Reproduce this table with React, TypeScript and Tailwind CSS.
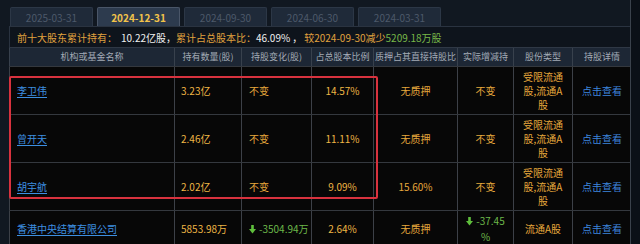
import React from "react";

const F = { fontFamily: '"Noto Sans CJK SC", "Noto Sans", sans-serif' };

const tabs = ["2025-03-31", "2024-12-31", "2024-09-30", "2024-06-30", "2024-03-31"];

function Down() {
  return (
    <svg width="7" height="9" viewBox="0 0 7 9" className="inline-block mr-[3px] align-[-1px]">
      <rect x="2.2" y="0" width="2.6" height="4.5" fill="#5fbf3c" />
      <path d="M0 4 L7 4 L3.5 8.5 Z" fill="#5fbf3c" />
    </svg>
  );
}

const cols = ["w-[165px]", "w-[67px]", "w-[70px]", "w-[62px]", "w-[84px]", "w-[56px]", "w-[59px]", "w-[59px]"];
const heads = ["机构或基金名称", "持有数量(股)", "持股变化(股)", "占总股本比例", "质押占其直接持股比", "实际增减持", "股份类型", "持股详情"];

type Row = { name: string; qty: string; chg: React.ReactNode; pct: string; pledge: string; act: React.ReactNode; type: React.ReactNode; h: string };

const restricted = (
  <div className="leading-[14px]">
    <div>受限流通</div>
    <div>股,流通A</div>
    <div>股</div>
  </div>
);

const rows: Row[] = [
  { name: "李卫伟", qty: "3.23亿", chg: "不变", pct: "14.57%", pledge: "无质押", act: "不变", type: restricted, h: "h-[48px]" },
  { name: "曾开天", qty: "2.46亿", chg: "不变", pct: "11.11%", pledge: "无质押", act: "不变", type: restricted, h: "h-[48px]" },
  { name: "胡宇航", qty: "2.02亿", chg: "不变", pct: "9.09%", pledge: "15.60%", act: "不变", type: restricted, h: "h-[48px]" },
  {
    name: "香港中央结算有限公司",
    qty: "5853.98万",
    chg: (
      <span className="text-[#6cb84a]">
        <Down />-3504.94万
      </span>
    ),
    pct: "2.64%",
    pledge: "无质押",
    act: (
      <div className="text-[#6cb84a] leading-[16px] text-center">
        <div>
          <Down />
          -37.45
        </div>
        <div>%</div>
      </div>
    ),
    type: "流通A股",
    h: "h-[36px]",
  },
];

export default function App() {
  return (
    <div style={F} className="w-[640px] h-[244px] bg-[#111821] overflow-hidden relative text-[10px]">
      <div className="flex">
        <div className="w-[9px] shrink-0" />
        <div className="w-[622px] shrink-0 flex flex-col border-r border-[#3a414b]">
          {/* tabs */}
          <div className="flex gap-[4px] pt-[7px] pl-[1px] h-[26px]">
            {tabs.map((t, i) => (
              <div
                key={t}
                className={
                  "w-[83px] h-[19px] flex items-center justify-center rounded-t-[2px] border border-b-0 text-[10px] " +
                  (i === 1
                    ? "bg-[#2d3b4e] border-[#4a5668] text-[#f2c34a] font-bold"
                    : "bg-[#1f2a39] border-[#2c3746] text-[#4d596a]")
                }
              >
                {t}
              </div>
            ))}
          </div>
          {/* summary */}
          <div className="h-[21px] bg-[#0e141c] border-t border-l border-[#2a3340] flex items-center pl-[7px] text-[10px] whitespace-nowrap">
            <span className="text-[#e0a23e]">前十大股东累计持有：</span>
            <span className="text-[#f0f0f0] ml-[4px]">10.22亿股，</span>
            <span className="text-[#e0a23e]">累计占总股本比：</span>
            <span className="text-[#f0f0f0]">46.09%</span>
            <span className="text-[#f0f0f0] mx-[2px]">，</span>
            <span className="text-[#e0a23e]">较2024-09-30减少</span>
            <span className="text-[#78b848]">5209.18万股</span>
          </div>
          {/* header */}
          <div className="h-[19px] bg-[#1d2735] flex border-t border-[#2f3845]">
            {heads.map((h, i) => (
              <div
                key={h}
                className={cols[i] + " shrink-0 flex items-center justify-center text-[#a3abb6] text-[9px] border-l border-[#38414d]"}
              >
                {h}
              </div>
            ))}
          </div>
          {/* rows */}
          {rows.map((r, ri) => (
            <div key={ri} className={r.h + " bg-[#070707] flex border-t border-[#34383e] text-[#e6a73c] overflow-hidden"}>
              <div className={cols[0] + " shrink-0 flex items-center pl-[7px] border-l border-[#3c4047]"}>
                <span className="text-[#3d8fe0] underline underline-offset-2">{r.name}</span>
              </div>
              <div className={cols[1] + " shrink-0 flex items-center pl-[6px] border-l border-[#3c4047] text-[#eeb645]"}>
                {r.qty}
              </div>
              <div className={cols[2] + " shrink-0 flex items-center pl-[7px] border-l border-[#3c4047]"}>{r.chg}</div>
              <div className={cols[3] + " shrink-0 flex items-center justify-center border-l border-[#3c4047] text-[#eeb645]"}>
                {r.pct}
              </div>
              <div className={cols[4] + " shrink-0 flex items-center justify-center border-l border-[#3c4047]"}>{r.pledge}</div>
              <div className={cols[5] + " shrink-0 flex items-center justify-center border-l border-[#3c4047]"}>{r.act}</div>
              <div className={cols[6] + " shrink-0 flex items-center justify-center text-center border-l border-[#3c4047]"}>
                {r.type}
              </div>
              <div className={cols[7] + " shrink-0 flex items-center justify-center border-l border-[#3c4047]"}>
                <span className="text-[#3d85dc]">点击查看</span>
              </div>
            </div>
          ))}
        </div>
        <div className="flex-1 bg-[#0b1017]" />
      </div>
      {/* highlight annotation */}
      <div className="absolute left-[9px] top-[76px] w-[369px] h-[123px] border-2 border-[#d8323e] rounded-[2px] pointer-events-none" />
    </div>
  );
}
